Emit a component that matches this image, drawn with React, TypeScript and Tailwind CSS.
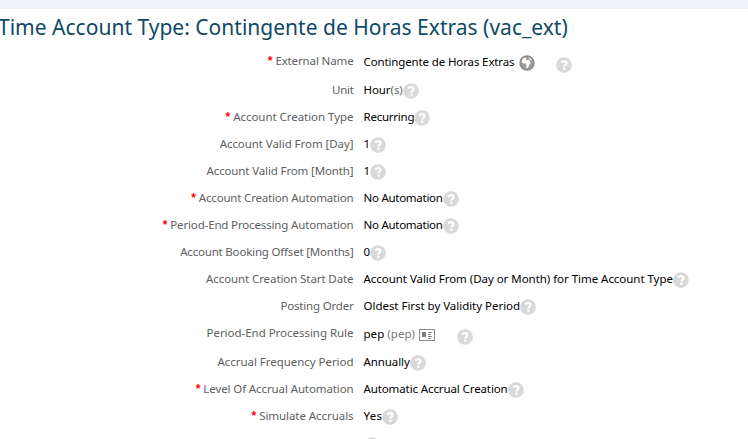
import type { ReactNode } from "react";
import clsx from "clsx";

type Field = {
  label: string;
  required?: boolean;
  value?: ReactNode;
  labelClass?: string;
  valueClass?: string;
  helpClass?: string;
  tall?: boolean;
};

function HelpIcon({ className }: { className?: string }) {
  return (
    <svg viewBox="0 0 16 16" className={clsx("size-4 shrink-0", className)}>
      <circle cx="8" cy="8" r="7.8" fill="#d9d9d9" />
      <path
        d="M5.2 5.5C6 4.6 7 4.2 8 4.2c1.5 0 2.5.7 2.5 1.9 0 1.6-2.1 1.6-2.1 3.4"
        fill="none"
        stroke="#fff"
        strokeWidth="2.2"
      />
      <rect x="7.2" y="10.7" width="2.3" height="2.1" fill="#fff" />
    </svg>
  );
}

function GlobeIcon() {
  return (
    <svg viewBox="0 0 16 16" className="mt-[2px] ml-[5px] size-4 shrink-0">
      <circle cx="8" cy="8" r="7.7" fill="#8a8a8a" />
      <circle cx="8" cy="8" r="6.3" fill="#9c9c9c" />
      <path
        d="M2.6 5.4 4.4 3.3l2.2-.8 1 .9-1 1.4 1.4.4 1.4-.4 1.5 1 .3 1.7.8.8-1.6 1-.8 2.3-.9 1.7-1.3-.3-.1-3.4-.6-1.4-2.3.2-1.4-1.2z"
        fill="#fff"
      />
      <path d="m9.2 2.3 2.3 1 1.6 2.2-1.9-.8z" fill="#fff" />
    </svg>
  );
}

function CardIcon() {
  return (
    <svg
      viewBox="0 0 16 12"
      className="mt-[2px] ml-1 h-3 w-4 shrink-0"
      shapeRendering="crispEdges"
    >
      <rect x=".5" y=".5" width="15" height="11" fill="#fff" stroke="#8c8c8c" />
      <rect x="3" y="3" width="4" height="5" fill="#7d7d7d" />
      <path d="M9 3.5h4M9 5.5h3M9 7.5h4M9 9.5h3" stroke="#8c8c8c" />
    </svg>
  );
}

const fields: Field[] = [
  {
    label: "External Name",
    required: true,
    tall: true,
    labelClass: "tracking-[-0.13px]",
    valueClass: "tracking-[-0.13px]",
    helpClass: "mt-[5px] ml-[21px]",
    value: (
      <>
        <span>Contingente de Horas Extras</span>
        <GlobeIcon />
      </>
    ),
  },
  {
    label: "Unit",
    labelClass: "tracking-[-0.3px]",
    valueClass: "tracking-[-0.08px]",
    value: (
      <span>
        Hour<span className="text-[#666]">(s)</span>
      </span>
    ),
  },
  {
    label: "Account Creation Type",
    required: true,
    value: "Recurring",
    labelClass: "tracking-[-0.04px]",
    valueClass: "tracking-[-0.24px]",
  },
  { label: "Account Valid From [Day]", value: "1", labelClass: "tracking-[-0.06px]" },
  { label: "Account Valid From [Month]", value: "1", labelClass: "tracking-[-0.13px]" },
  {
    label: "Account Creation Automation",
    required: true,
    value: "No Automation",
    labelClass: "tracking-[-0.18px]",
    valueClass: "tracking-[-0.27px]",
  },
  {
    label: "Period-End Processing Automation",
    required: true,
    value: "No Automation",
    labelClass: "tracking-[-0.15px]",
    valueClass: "tracking-[-0.27px]",
  },
  {
    label: "Account Booking Offset [Months]",
    value: "0",
    labelClass: "tracking-[-0.19px]",
  },
  {
    label: "Account Creation Start Date",
    value: "Account Valid From (Day or Month) for Time Account Type",
    labelClass: "tracking-[-0.09px]",
    valueClass: "tracking-[-0.04px]",
  },
  {
    label: "Posting Order",
    value: "Oldest First by Validity Period",
    labelClass: "tracking-[-0.19px]",
    valueClass: "tracking-[-0.03px]",
  },
  {
    label: "Period-End Processing Rule",
    tall: true,
    labelClass: "tracking-[-0.03px]",
    valueClass: "tracking-[0.05px]",
    helpClass: "mt-[5px] ml-[22px]",
    value: (
      <>
        <span>
          pep <span className="text-[#777]">(pep)</span>
        </span>
        <CardIcon />
      </>
    ),
  },
  {
    label: "Accrual Frequency Period",
    value: "Annually",
    labelClass: "tracking-[-0.04px]",
    valueClass: "tracking-[-0.08px]",
  },
  {
    label: "Level Of Accrual Automation",
    required: true,
    value: "Automatic Accrual Creation",
    labelClass: "tracking-[-0.11px]",
    valueClass: "tracking-[-0.11px]",
  },
  {
    label: "Simulate Accruals",
    required: true,
    value: "Yes",
    labelClass: "tracking-[-0.06px]",
    valueClass: "tracking-[0.3px]",
  },
  { label: "", helpClass: "mt-0.5" },
];

function FieldRow({ field }: { field: Field }) {
  return (
    <div className={clsx("flex shrink-0 items-start", field.tall ? "h-[29px]" : "h-[27px]")}>
      <div className="flex h-[27px] w-[353.5px] items-center justify-end gap-[3px] pb-[2px] text-[#606060]">
        {field.required && (
          <span className="font-['Liberation_Sans',sans-serif] text-xs font-bold text-[#f00]">
            *
          </span>
        )}
        <span className={field.labelClass}>{field.label}</span>
      </div>
      <div
        className={clsx(
          "ml-[10px] flex items-center text-black",
          field.tall ? "h-[29px]" : "h-[27px]",
        )}
      >
        <div className={clsx("flex items-center pb-[2px]", field.valueClass)}>{field.value}</div>
        <HelpIcon className={field.helpClass ?? "mt-[1.5px]"} />
      </div>
    </div>
  );
}

export default function App() {
  return (
    <main className="flex h-[439px] w-[748px] flex-col overflow-hidden bg-white font-['Noto_Sans',sans-serif] text-[11.5px] leading-4 whitespace-nowrap">
      <div className="h-[9px] shrink-0 bg-[#edf3f8]" />
      <h1 className="-ml-[2px] h-[39px] shrink-0 text-[21px] leading-[36px] tracking-[0.01px] text-[#0f4a66]">
        Time Account Type: Contingente de Horas Extras (vac_ext)
      </h1>
      {fields.map((field, i) => (
        <FieldRow key={i} field={field} />
      ))}
    </main>
  );
}
